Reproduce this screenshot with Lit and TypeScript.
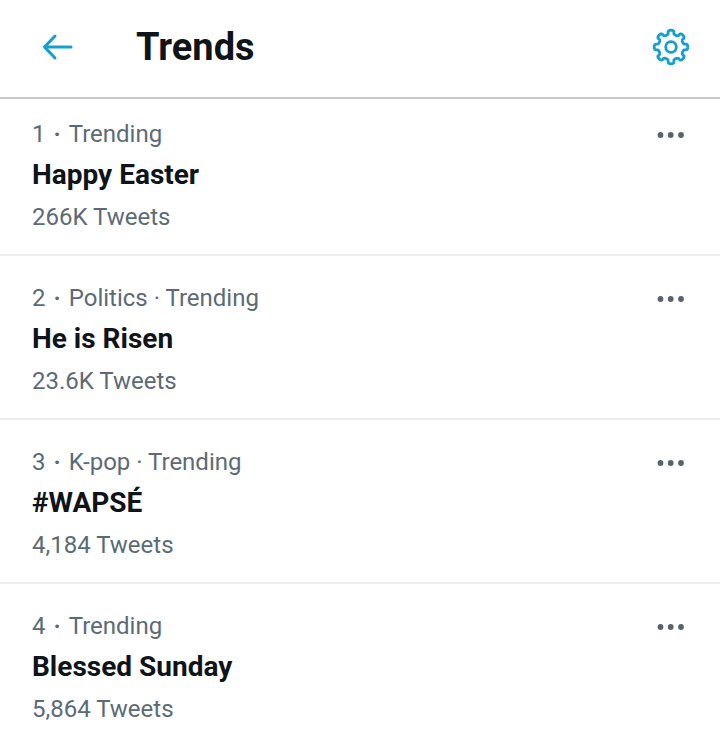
import { LitElement, html, css } from "lit";
import { customElement } from "lit/decorators.js";

interface Trend {
  rank: number;
  context: string;
  title: string;
  count: string;
}

const trends: Trend[] = [
  { rank: 1, context: "Trending", title: "Happy Easter", count: "266K Tweets" },
  { rank: 2, context: "Politics · Trending", title: "He is Risen", count: "23.6K Tweets" },
  { rank: 3, context: "K-pop · Trending", title: "#WAPSÉ", count: "4,184 Tweets" },
  { rank: 4, context: "Trending", title: "Blessed Sunday", count: "5,864 Tweets" },
];

// Outline of the settings cog: eight rounded teeth joined by round valleys.
function cogPath(): string {
  const points: string[] = [];
  const steps = 240;
  for (let i = 0; i < steps; i++) {
    const t = (i / steps) * Math.PI * 2;
    const a = t + 0.06 * Math.sin(16 * t);
    const r = 14.7 + 2.1 * Math.cos(8 * t);
    points.push(`${(20 + r * Math.sin(a)).toFixed(2)} ${(20 - r * Math.cos(a)).toFixed(2)}`);
  }
  return `M${points.join("L")}Z`;
}

@customElement("app-root")
export class AppRoot extends LitElement {
  static styles = css`
    :host {
      display: block;
      min-height: 100vh;
      background: #fff;
      color: #0f1419;
      font-family: Roboto, "Liberation Sans", sans-serif;
    }
    button {
      display: flex;
      padding: 0;
      border: 0;
      background: none;
      color: inherit;
      cursor: pointer;
    }
    .bar {
      display: flex;
      align-items: center;
      padding: 23px 29px 26px 38px;
      border-bottom: 2px solid #c6c8c9;
      color: #139fd0;
    }
    .heading {
      flex: 1;
      margin: 0 0 0 58px;
      color: #0f1419;
      font-size: 38px;
      line-height: 48px;
      font-weight: 700;
    }
    .list {
      margin: 0;
      padding: 0;
      list-style: none;
    }
    .trend {
      display: flex;
      justify-content: space-between;
      align-items: flex-start;
      padding: 26px 32px 21px;
      border-bottom: 2px solid #ebedee;
    }
    .trend:first-child {
      padding-top: 19px;
    }
    .meta,
    .count {
      margin: 0;
      color: #5b6b76;
      font-size: 24px;
      line-height: 32px;
    }
    .rank {
      margin-right: 8px;
    }
    .dot {
      margin-right: 8px;
      font-weight: 700;
    }
    .title {
      margin: 5px 0 6px;
      font-size: 28px;
      line-height: 40px;
      font-weight: 700;
    }
    .more {
      color: #56646e;
    }
  `;

  render() {
    return html`
      <header class="bar">
        <button aria-label="Back">
          <svg width="40" height="40" viewBox="0 0 40 40" fill="none" stroke="currentColor" stroke-width="3" stroke-linecap="round" stroke-linejoin="round">
            <path d="M33 20H7M17 9L6.5 20L17 31" />
          </svg>
        </button>
        <h1 class="heading">Trends</h1>
        <button aria-label="Settings">
          <svg width="40" height="40" viewBox="0 0 40 40" fill="none" stroke="currentColor" stroke-width="2.8" stroke-linejoin="round">
            <path d=${cogPath()} />
            <circle cx="20" cy="20" r="5.3" />
          </svg>
        </button>
      </header>
      <ol class="list">
        ${trends.map(
          (t) => html`
            <li class="trend">
              <div>
                <p class="meta"><span class="rank">${t.rank}</span><span class="dot">·</span><span>${t.context}</span></p>
                <h2 class="title">${t.title}</h2>
                <p class="count">${t.count}</p>
              </div>
              <button class="more" aria-label="More options for ${t.title}">
                <svg width="34" height="32" viewBox="0 0 34 32" fill="currentColor">
                  <circle cx="6.5" cy="17" r="2.9" />
                  <circle cx="16.7" cy="17" r="2.9" />
                  <circle cx="27" cy="17" r="2.9" />
                </svg>
              </button>
            </li>
          `,
        )}
      </ol>
    `;
  }
}
